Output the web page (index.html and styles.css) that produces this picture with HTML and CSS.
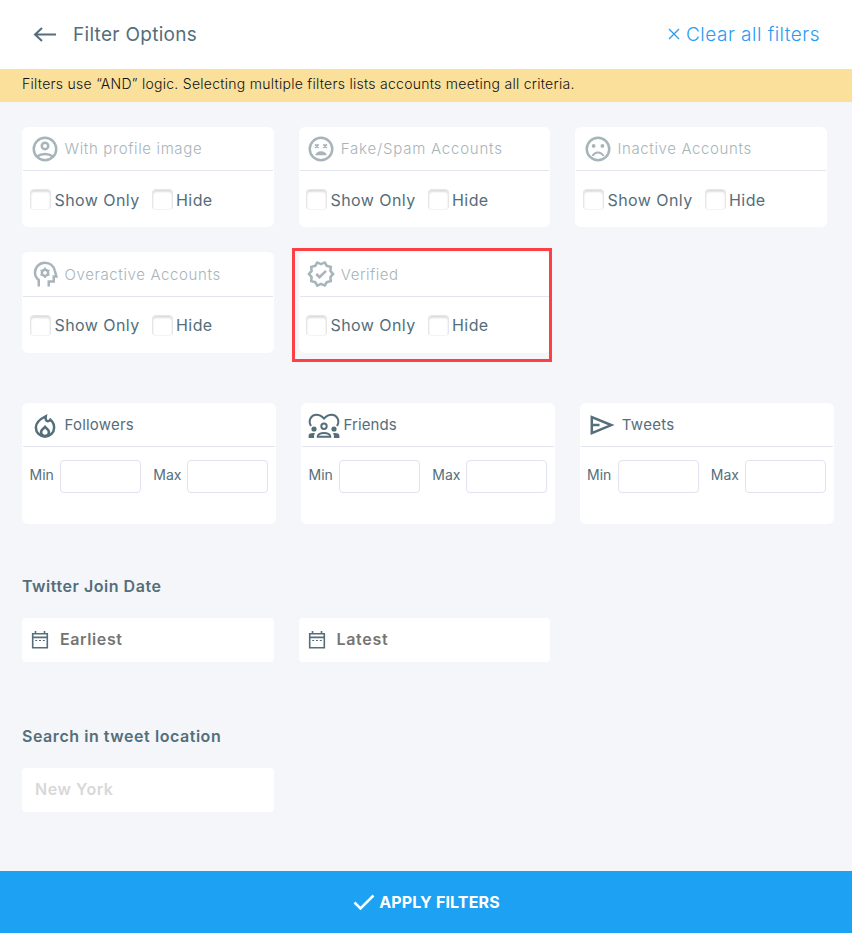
FILE: index.html
```html
<!DOCTYPE html>
<html lang="en">
<head>
<meta charset="utf-8">
<title>Filter Options</title>
<link rel="stylesheet" href="styles.css">
</head>
<body>
<header class="topbar">
  <svg class="back" viewBox="0 0 24 16"><path d="M9 1 2 7.500l7 6.500M2.500 7.500H23"/></svg>
  <h1 class="title"><span>Filter Options</span></h1>
  <a class="clear"><svg class="cross" viewBox="0 0 12 12"><path d="m1 1 10 10M11 1 1 11"/></svg><span>Clear all filters</span></a>
</header>
<p class="notice"><span>Filters use “AND” logic. Selecting multiple filters lists accounts meeting all criteria.</span></p>

<main class="content">
  <section class="toggles">
    <article class="card">
      <div class="head muted"><svg class="icon" viewBox="0 0 24 24"><circle class="line" cx="12" cy="12" r="9"/><circle class="line" cx="12" cy="9.500" r="2.600"/><path class="line" d="M5.700 18c3.700-2.700 8.900-2.700 12.600 0"/></svg><span class="w-profile">With profile image</span></div>
      <div class="checks"><label><i class="box"></i><span class="w-show">Show Only</span></label><label><i class="box"></i><span class="w-hide">Hide</span></label></div>
    </article>
    <article class="card middle">
      <div class="head muted"><svg class="icon" viewBox="0 0 24 24"><circle class="line" cx="12" cy="12" r="9"/><path class="cross-eyes" d="m7.300 8.300 2.800 2.800m0-2.800-2.800 2.800m6.600-2.800 2.800 2.800m0-2.800-2.800 2.800"/><path d="M7.300 17c.7-2.200 2.500-3.300 4.700-3.300s4 1.100 4.700 3.300z"/></svg><span class="w-fake">Fake/Spam Accounts</span></div>
      <div class="checks"><label><i class="box"></i><span class="w-show">Show Only</span></label><label><i class="box"></i><span class="w-hide">Hide</span></label></div>
    </article>
    <article class="card">
      <div class="head muted"><svg class="icon" viewBox="0 0 24 24"><circle class="line" cx="12" cy="12" r="9"/><circle cx="8.500" cy="9.500" r="1.500"/><circle cx="15.500" cy="9.500" r="1.500"/><path d="M12 14c-2.330 0-4.320 1.450-5.120 3.500h1.670c.69-1.190 1.970-2 3.450-2s2.750.81 3.450 2h1.670C16.320 15.450 14.330 14 12 14z"/></svg><span class="w-inactive">Inactive Accounts</span></div>
      <div class="checks"><label><i class="box"></i><span class="w-show">Show Only</span></label><label><i class="box"></i><span class="w-hide">Hide</span></label></div>
    </article>
    <article class="card second">
      <div class="head muted"><svg class="icon" viewBox="0 0 24 24"><path class="line" d="M7 22v-5.200C5.200 15.300 4 13.100 4 10.700 4 6.600 7.500 3 12 3c4 0 7 2.700 7.800 6.200l1.300 4.800H19v4h-4v4"/><circle class="line" cx="12" cy="11" r="2.500"/><path class="thin" d="M12 6.800v2M12 13.200v2M8.360 8.900l1.730 1M13.900 12.100l1.730 1M8.360 13.100l1.730-1M13.900 9.900l1.730-1"/></svg><span class="w-over">Overactive Accounts</span></div>
      <div class="checks"><label><i class="box"></i><span class="w-show">Show Only</span></label><label><i class="box"></i><span class="w-hide">Hide</span></label></div>
    </article>
    <article class="card second middle marked">
      <div class="head muted"><svg class="icon" viewBox="0 0 24 24"><path d="m23 11.990-2.440-2.790.34-3.690-3.610-.82L15.400 1.500 12 2.960 8.600 1.500 6.710 4.690 3.100 5.500l.34 3.700L1 11.990l2.440 2.790-.34 3.700 3.610.82 1.890 3.200 3.400-1.470 3.400 1.460 1.890-3.190 3.610-.82-.34-3.690zm-3.950 1.480-.56.650.08.850.18 1.950-1.900.43-.84.190-.44.740-.99 1.680-1.780-.77-.8-.34-.79.340-1.780.77-.99-1.670-.44-.74-.84-.19-1.900-.43.180-1.960.08-.85-.56-.65L3.670 12l1.290-1.480.56-.65-.09-.86-.18-1.940 1.900-.43.840-.19.440-.74.990-1.680 1.780.77.800.34.790-.34 1.780-.77.990 1.680.44.740.84.190 1.900.43-.18 1.950-.08.850.56.650L20.330 12z"/><path class="line" d="m8.200 12 2.600 2.600 5.200-5.100"/></svg><span class="w-verified">Verified</span></div>
      <div class="checks"><label><i class="box"></i><span class="w-show">Show Only</span></label><label><i class="box"></i><span class="w-hide">Hide</span></label></div>
    </article>
  </section>

  <section class="ranges">
    <article class="card range">
      <div class="head"><svg class="icon" viewBox="0 0 24 24"><path class="line" d="M12.600 5C7.500 7.500 4.700 10 4.700 14c0 4.100 3.200 7.300 7.300 7.300s7.300-3.200 7.300-7.300c0-2.600-1.200-4.700-3-6.300-.5.800-1.200 1.200-2 1.200-1.300 0-2.200-1.300-1.700-3.900zM12 13.500l-2.200 2.200c-1.900 2-.7 5.100 2.200 5.100s4.100-3.100 2.200-5.100z"/></svg><span class="w-followers">Followers</span></div>
      <div class="fields"><span>Min</span><input class="num"><span>Max</span><input class="num"></div>
    </article>
    <article class="card range">
      <div class="head people"><svg class="friends" viewBox="0 0 32 26"><path class="line" d="M3 14C-.5 8 3.500 2.800 8.300 2.800c3.300 0 5.400 1.300 7.700 3.800 2.300-2.500 4.400-3.800 7.700-3.800 4.800 0 8.800 5.200 5.300 11.200"/><circle cx="6" cy="17" r="2.600"/><circle cx="26" cy="17" r="2.600"/><circle class="line" cx="16" cy="14.300" r="2.700"/><path class="line" d="M9.700 24.700c0-5 12.600-5 12.600 0z"/><path d="M.6 26v-2.500c0-2.300 3-2.900 6.400-2.400-.8 1.300-1.100 2.800-.9 4.900zM31.400 26v-2.500c0-2.300-3-2.900-6.400-2.400.8 1.300 1.100 2.800.9 4.900z"/></svg><span class="w-friends">Friends</span></div>
      <div class="fields"><span>Min</span><input class="num"><span>Max</span><input class="num"></div>
    </article>
    <article class="card range last">
      <div class="head"><svg class="icon" viewBox="0 0 30 30"><path class="wide" d="M4.800 7v16.200L24.300 15.100zM5 15.100h7.500"/></svg><span class="w-tweets">Tweets</span></div>
      <div class="fields"><span>Min</span><input class="num"><span>Max</span><input class="num"></div>
    </article>
  </section>

  <h2 class="label"><span class="w-join">Twitter Join Date</span></h2>
  <div class="dates">
    <div class="date"><svg class="cal" viewBox="0 0 18 20"><path d="M1.700 3.700h14.600v14H1.700zM1.700 7.400h14.600M4.500 1v3M13.500 1v3"/><path class="dots" d="M4.200 10.500h2M8 10.500h2M11.800 10.500h2"/></svg><span class="w-early">Earliest</span></div>
    <div class="date latest"><svg class="cal" viewBox="0 0 18 20"><path d="M1.700 3.700h14.600v14H1.700zM1.700 7.400h14.600M4.500 1v3M13.500 1v3"/><path class="dots" d="M4.200 10.500h2M8 10.500h2M11.800 10.500h2"/></svg><span class="w-late">Latest</span></div>
  </div>

  <h2 class="label place"><span class="w-search">Search in tweet location</span></h2>
  <div class="date location"><span class="w-york">New York</span></div>
</main>

<footer class="apply"><svg class="tick" viewBox="0 0 22 18"><path d="m1.500 9.500 6 6L20.500 2.500"/></svg><span class="w-apply">APPLY FILTERS</span></footer>
</body>
</html>
```
FILE: styles.css
```css
* { box-sizing: border-box; }
body { margin: 0; width: 852px; height: 934px; background: #f4f6fa; color: #546e7a; font-family: Inter, "Open Sans", sans-serif; font-size: 16px; line-height: 24px; }
h1, h2, p { margin: 0; font-weight: 400; }
span { white-space: nowrap; }
svg { flex: none; fill: none; stroke: currentColor; }
.topbar { height: 69px; background: #fff; display: flex; align-items: center; padding: 0 32px 0 33px; }
.back { width: 24px; height: 16px; stroke-width: 2; margin-right: 16px; }
.title { font-size: 19px; letter-spacing: .3px; }
.clear { margin-left: auto; display: flex; align-items: center; color: #2a9bf0; font-size: 19px; font-weight: 300; letter-spacing: .49px; }
.cross { width: 12px; height: 12px; stroke-width: 1.300; margin: 0 6px 1px 0; }
.notice { height: 33px; padding: 0 22px; background: #fbe09c; color: #111; font-size: 14px; line-height: 30px; font-weight: 300; letter-spacing: .27px; }
.content { height: 769px; padding: 25px 18px 0 22px; }
.toggles { display: grid; grid-template-columns: 252px 251px 252px; column-gap: 25px; row-gap: 25px; }
.card { height: 100px; background: #fff; border-radius: 6px; padding: 0 1px; }
.second { height: 101px; }
.marked { position: relative; }
.marked::after { content: ""; position: absolute; inset: -4px -2px -9px -7px; border: 3px solid #fd4043; }
.head { height: 44px; display: flex; align-items: center; padding-left: 6.500px; border-bottom: 1px solid #e4e4ef; font-size: 15px; }
.second .head { height: 45px; }
.second .head span { padding-top: 2px; }
.middle .head, .last .head { padding-left: 5.800px; }
.muted { color: #a7b4ba; font-weight: 300; }
.icon { width: 30px; height: 30px; margin-right: 5px; }
.icon, .friends { fill: currentColor; stroke: none; }
.line, .thin, .wide, .cross-eyes { fill: none; stroke: currentColor; stroke-width: 2; }
.thin { stroke-width: 1.300; }
.cross-eyes { stroke-width: 1.500; }
.wide { stroke-width: 2.500; }
.checks { display: flex; gap: 12px; padding: 17px 7px; }
.middle .checks { padding-left: 6px; }
.second .checks { padding-top: 16px; }
.checks label { display: flex; align-items: flex-start; gap: 3.500px; height: 24px; }
.box { width: 21px; height: 21px; margin-top: 1px; border-radius: 4px; background: #fff; border: 1px solid #e6e6e6; border-bottom-color: #f4f4f4; box-shadow: inset 0 2px 2px #ddd; }
.second .box { margin-top: 2px; }
.ranges { display: grid; grid-template-columns: repeat(3, 254px); gap: 25px; margin-top: 50px; }
.range { height: 121px; }
.people { padding-left: 5.500px; }
.friends { width: 32px; height: 26px; margin-right: 4px; }
.fields { display: flex; align-items: center; padding: 13px 6px 13px 6.500px; font-size: 14px; }
.last .fields { padding-left: 6px; }
.fields span { padding-bottom: 3px; }
.num { width: 81px; height: 33px; border: 1px solid #e2e2f0; border-radius: 4px; background: #fff; padding: 0; margin: 0 12px 0 6.500px; }
.num:last-child { margin-left: 6px; }
.label { height: 24px; margin-top: 50px; font-size: 16px; font-weight: 600; }
.dates { display: flex; gap: 25px; margin-top: 20px; }
.date { width: 252px; height: 44px; background: #fff; border-radius: 4px; display: flex; align-items: center; padding-left: 9px; color: #757575; font-weight: 600; }
.date span { padding-bottom: 2px; }
.latest { width: 251px; padding-left: 8.500px; }
.cal { width: 18px; height: 20px; margin-right: 11px; stroke-width: 1.600; color: #546e7a; }
.dots { stroke-width: 1.200; }
.place { margin-top: 62px; }
.location { margin-top: 20px; padding-left: 13px; color: #d8d8d8; }
.apply { height: 62px; padding-left: 1px; background: #1da1f2; color: #fff; display: flex; justify-content: center; align-items: center; font-weight: 700; }
.tick { width: 22px; height: 18px; stroke-width: 2.500; margin-right: 4px; }

/* Per-label tracking */
.w-profile { letter-spacing: .64px; }
.w-fake { letter-spacing: .78px; }
.w-inactive { letter-spacing: .62px; }
.w-over { letter-spacing: .62px; }
.w-verified { letter-spacing: .55px; }
.w-show, .w-hide { letter-spacing: .42px; }
.w-followers { letter-spacing: .2px; }
.w-friends { letter-spacing: .1px; }
.w-tweets { letter-spacing: .3px; }
.w-join { letter-spacing: .53px; }
.w-early { letter-spacing: .6px; }
.w-late { letter-spacing: .68px; }
.w-search, .w-york { letter-spacing: .55px; }
.w-apply { letter-spacing: .15px; }
```
